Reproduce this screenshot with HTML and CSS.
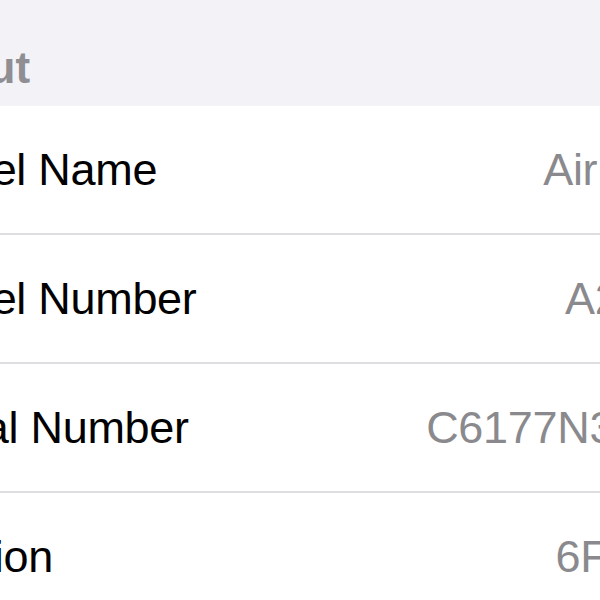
FILE: index.html
```html
<!DOCTYPE html>
<html lang="en">
<head>
  <meta charset="utf-8">
  <title>About</title>
  <meta name="viewport" content="width=device-width, initial-scale=1.0">
  <link rel="stylesheet" href="styles.css">
</head>
<body>

<div id="screen">
  <div id="header">
    <div class="heading">About</div>
  </div>

  <div id="list">
    <div class="row">
      <span class="label">Model Name</span>
      <span class="value">AirPods Pro</span>
    </div>
    <div class="row">
      <span class="label">Model Number</span>
      <span class="value">A2084 N/A</span>
    </div>
    <div class="row">
      <span class="label">Serial Number</span>
      <span class="value">C6177N3KLKKT5</span>
    </div>
    <div class="row">
      <span class="label">Version</span>
      <span class="value">6F8 (2C54)</span>
    </div>
  </div>
</div>

</body>
</html>
```
FILE: styles.css
```css
html, body {
  margin: 0;
  height: 100%;
  overflow: hidden;
  background-color: #ffffff;
  font-family: "Liberation Sans", Arial, sans-serif;
}

/* the list is wider than the window, both edges run off screen */
#screen {
  margin-left: -95px;
  width: 875px;
}

#header {
  background-color: #f2f2f7;
  height: 106px;
  display: flex;
  align-items: flex-end;
}

.heading {
  font-size: 44px;
  font-weight: bold;
  color: #8e8e93;
  line-height: 1;
  padding-bottom: 16px;
  margin-left: -2px;
}

.row {
  display: flex;
  justify-content: space-between;
  align-items: center;
  height: 127px;
  border-bottom: 2px solid #dedee0;
  font-size: 45px;
  letter-spacing: -0.3px;
}

.label {
  color: #000000;
}

.value {
  color: #8a8a8e;
}
```
